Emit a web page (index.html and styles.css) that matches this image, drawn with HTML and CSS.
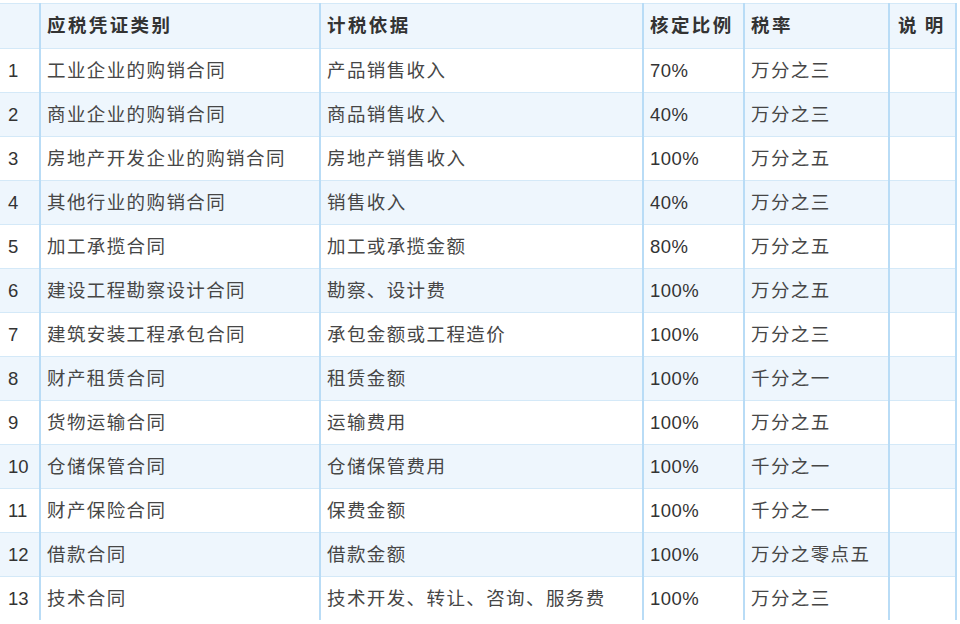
FILE: index.html
```html
<!DOCTYPE html>
<html lang="zh-CN">
<head>
<meta charset="utf-8">
<title>印花税税目税率</title>
<link rel="stylesheet" href="styles.css">
</head>
<body>
<table class="tax">
  <colgroup>
    <col class="c-no"><col class="c-type"><col class="c-basis"><col class="c-ratio"><col class="c-rate"><col class="c-note">
  </colgroup>
  <thead>
    <tr><th></th><th>应税凭证类别</th><th>计税依据</th><th>核定比例</th><th>税率</th><th class="note">说 明</th></tr>
  </thead>
  <tbody>
    <tr><td class="no">1</td><td>工业企业的购销合同</td><td>产品销售收入</td><td class="num">70%</td><td>万分之三</td><td></td></tr>
    <tr><td class="no">2</td><td>商业企业的购销合同</td><td>商品销售收入</td><td class="num">40%</td><td>万分之三</td><td></td></tr>
    <tr><td class="no">3</td><td>房地产开发企业的购销合同</td><td>房地产销售收入</td><td class="num">100%</td><td>万分之五</td><td></td></tr>
    <tr><td class="no">4</td><td>其他行业的购销合同</td><td>销售收入</td><td class="num">40%</td><td>万分之三</td><td></td></tr>
    <tr><td class="no">5</td><td>加工承揽合同</td><td>加工或承揽金额</td><td class="num">80%</td><td>万分之五</td><td></td></tr>
    <tr><td class="no">6</td><td>建设工程勘察设计合同</td><td>勘察、设计费</td><td class="num">100%</td><td>万分之五</td><td></td></tr>
    <tr><td class="no">7</td><td>建筑安装工程承包合同</td><td>承包金额或工程造价</td><td class="num">100%</td><td>万分之三</td><td></td></tr>
    <tr><td class="no">8</td><td>财产租赁合同</td><td>租赁金额</td><td class="num">100%</td><td>千分之一</td><td></td></tr>
    <tr><td class="no">9</td><td>货物运输合同</td><td>运输费用</td><td class="num">100%</td><td>万分之五</td><td></td></tr>
    <tr><td class="no">10</td><td>仓储保管合同</td><td>仓储保管费用</td><td class="num">100%</td><td>千分之一</td><td></td></tr>
    <tr><td class="no">11</td><td>财产保险合同</td><td>保费金额</td><td class="num">100%</td><td>千分之一</td><td></td></tr>
    <tr><td class="no">12</td><td>借款合同</td><td>借款金额</td><td class="num">100%</td><td>万分之零点五</td><td></td></tr>
    <tr class="last"><td class="no">13</td><td>技术合同</td><td>技术开发、转让、咨询、服务费</td><td class="num">100%</td><td>万分之三</td><td></td></tr>
  </tbody>
</table>
</body>
</html>
```

FILE: styles.css
```css
html, body {
  margin: 0;
  padding: 0;
  background: #ffffff;
}

body {
  padding-top: 3px;
  font-family: "Liberation Sans", "Noto Sans CJK SC", sans-serif;
  color: #464646;
}

.tax {
  border-collapse: collapse;
  table-layout: fixed;
  width: 956px;
  font-size: 18.5px;
  line-height: 20px;
}

.c-no { width: 40px; }
.c-type { width: 280px; }
.c-basis { width: 323px; }
.c-ratio { width: 101px; }
.c-rate { width: 145px; }
.c-note { width: 67px; }

.tax th,
.tax td {
  height: 43px;
  padding: 0 6px;
  text-align: left;
  vertical-align: middle;
  white-space: nowrap;
  overflow: hidden;
  letter-spacing: 1.4px;
  border-top: 1px solid #d4e9f8;
  border-bottom: 1px solid #d4e9f8;
  border-left: 2px solid #b9dcf6;
  border-right: 2px solid #b9dcf6;
}

.tax th:first-child,
.tax td:first-child {
  border-left: none;
}

.tax tr.last td {
  border-bottom: none;
}

.tax thead tr {
  background: #eef6fd;
}

.tax th {
  font-weight: bold;
  color: #333333;
  height: 44px;
  letter-spacing: 2.4px;
}

.tax th.note {
  white-space: pre;
  padding-left: 8px;
  letter-spacing: 1.5px;
}

.tax tbody tr:nth-child(even) {
  background: #eef6fd;
}

.tax td.no {
  padding-left: 8px;
  letter-spacing: 0;
  color: #333333;
}

.tax td.num {
  letter-spacing: 0.5px;
  color: #333333;
}
```
